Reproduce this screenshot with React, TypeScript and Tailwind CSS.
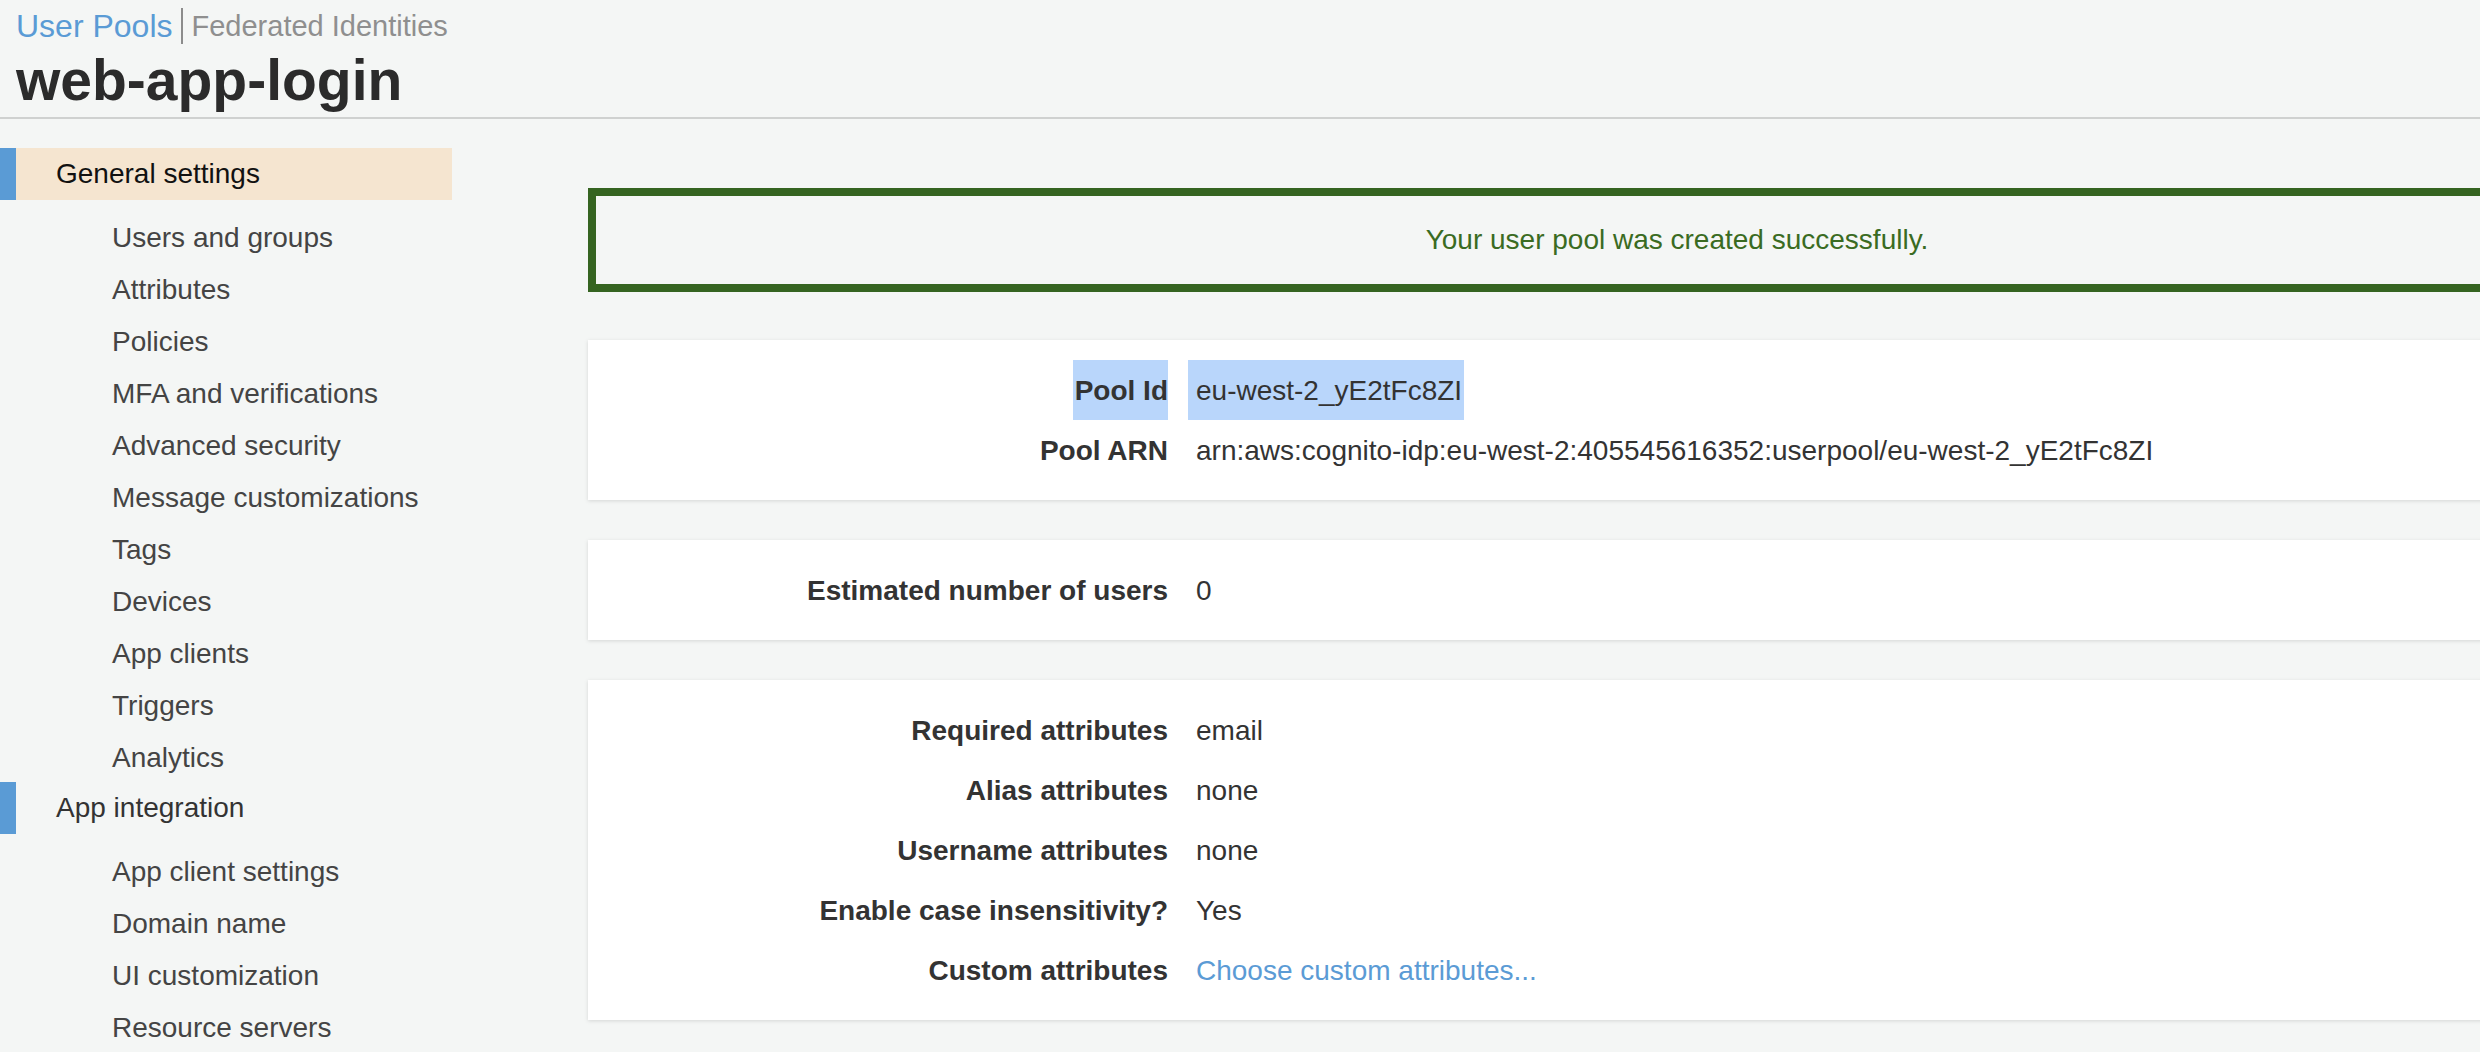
import React from 'react';

type Row = {
  label: string;
  value: string;
  link?: boolean;
  selected?: boolean;
};

const generalItems = [
  'Users and groups',
  'Attributes',
  'Policies',
  'MFA and verifications',
  'Advanced security',
  'Message customizations',
  'Tags',
  'Devices',
  'App clients',
  'Triggers',
  'Analytics',
];

const integrationItems = ['App client settings', 'Domain name', 'UI customization', 'Resource servers'];

const poolRows: Row[] = [
  { label: 'Pool Id', value: 'eu-west-2_yE2tFc8ZI', selected: true },
  { label: 'Pool ARN', value: 'arn:aws:cognito-idp:eu-west-2:405545616352:userpool/eu-west-2_yE2tFc8ZI' },
];

const userRows: Row[] = [{ label: 'Estimated number of users', value: '0' }];

const attributeRows: Row[] = [
  { label: 'Required attributes', value: 'email' },
  { label: 'Alias attributes', value: 'none' },
  { label: 'Username attributes', value: 'none' },
  { label: 'Enable case insensitivity?', value: 'Yes' },
  { label: 'Custom attributes', value: 'Choose custom attributes...', link: true },
];

const SectionHeader = ({ title, active }: { title: string; active?: boolean }) => (
  <div className="flex h-[52px]">
    <div className="w-4 bg-[#5a9bd5]" />
    <div
      className={`flex flex-1 items-center pl-10 ${active ? 'bg-[#f5e5d0] text-[#111]' : 'text-[#333]'}`}
    >
      {title}
    </div>
  </div>
);

const NavItem = ({ label }: { label: string }) => (
  <div className="h-[52px] pl-[112px] pt-[2px] leading-[52px] text-[#444]">{label}</div>
);

const InfoCard = ({ rows }: { rows: Row[] }) => (
  <div className="bg-white py-5 shadow-[0_1px_4px_rgba(0,0,0,0.13)]">
    {rows.map((row) => (
      <div key={row.label} className="flex h-[60px] items-center">
        <div className="flex w-[580px] justify-end font-bold text-[#333]">
          <span
            className={`h-[60px] pl-[2px] pt-[2px] leading-[58px] ${row.selected ? 'bg-[#b9d6fb]' : ''}`}
          >
            {row.label}
          </span>
        </div>
        <div className="pl-5">
          <span
            className={`inline-block h-[60px] pl-2 pr-[2px] pt-[2px] leading-[58px] ${
              row.selected ? 'bg-[#b9d6fb]' : ''
            } ${row.link ? 'text-[#5b9bd5]' : 'text-[#333]'}`}
          >
            {row.value}
          </span>
        </div>
      </div>
    ))}
  </div>
);

export default function App() {
  return (
    <div className="h-[1052px] w-full overflow-hidden bg-[#f4f6f5] font-['Liberation_Sans',Arial,sans-serif] text-[28px]">
      {/* page header */}
      <div className="border-b-2 border-[#cfd1d0] px-4 pb-2 pt-2">
        <div className="flex h-[36px] items-center leading-[36px]">
          <span className="text-[32px] text-[#5a9bd5]">User Pools</span>
          <span className="ml-[8px] mr-[9px] h-[36px] w-[2px] bg-[#8c8c8c]" />
          <span className="text-[29px] font-light text-[#8f8f8f]">Federated Identities</span>
        </div>
        <h1 className="mt-2 text-[57px] font-bold leading-[57px] text-[#2b2b2b]">web-app-login</h1>
      </div>

      <div className="flex">
        {/* sidebar */}
        <nav className="w-[452px] shrink-0 pt-[29px]">
          <SectionHeader title="General settings" active />
          <div className="mt-[10px]">
            {generalItems.map((item) => (
              <NavItem key={item} label={item} />
            ))}
          </div>
          <SectionHeader title="App integration" />
          <div className="mt-[10px]">
            {integrationItems.map((item) => (
              <NavItem key={item} label={item} />
            ))}
          </div>
        </nav>

        {/* main content */}
        <main className="w-[2178px] shrink-0 pl-[136px] pt-[69px]">
          <div className="flex h-[104px] w-[2178px] items-center justify-center border-8 border-[#356421] text-[#3a6b22]">
            Your user pool was created successfully.
          </div>
          <div className="mt-12 flex w-[2178px] flex-col gap-10">
            <InfoCard rows={poolRows} />
            <InfoCard rows={userRows} />
            <InfoCard rows={attributeRows} />
          </div>
        </main>
      </div>
    </div>
  );
}
